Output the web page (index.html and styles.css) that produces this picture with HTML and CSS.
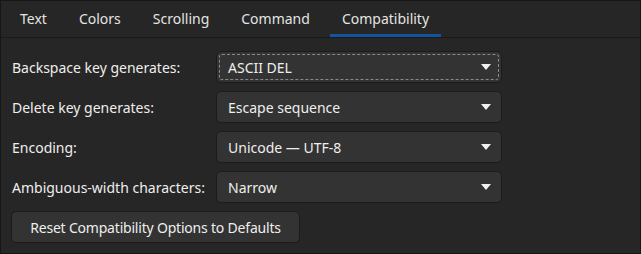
FILE: index.html
```html
<!DOCTYPE html>
<html>
<head>
<meta charset="utf-8">
<link rel="stylesheet" href="styles.css">
</head>
<body>
<div class="window">
  <div class="tabs">
    <div class="tab">Text</div>
    <div class="tab">Colors</div>
    <div class="tab">Scrolling</div>
    <div class="tab">Command</div>
    <div class="tab active">Compatibility</div>
  </div>
  <div class="content">
    <div class="grid">
      <div class="label">Backspace key generates:</div>
      <div class="combo focused"><span>ASCII DEL</span><span class="arrow"></span></div>
      <div class="label">Delete key generates:</div>
      <div class="combo"><span>Escape sequence</span><span class="arrow"></span></div>
      <div class="label">Encoding:</div>
      <div class="combo"><span>Unicode — UTF-8</span><span class="arrow"></span></div>
      <div class="label">Ambiguous-width characters:</div>
      <div class="combo"><span>Narrow</span><span class="arrow"></span></div>
    </div>
    <div class="actions">
      <button class="btn">Reset Compatibility Options to Defaults</button>
    </div>
  </div>
</div>
</body>
</html>
```
FILE: styles.css
```css
html, body {
  margin: 0;
  padding: 0;
  background: #262626;
}
.window {
  box-sizing: border-box;
  width: 641px;
  height: 254px;
  border: 1px solid #161616;
  background: #262626;
  color: #eeeeec;
  font-family: "Noto Sans", "Open Sans", sans-serif;
  font-size: 14px;
}
.tabs {
  display: flex;
  gap: 8px;
  padding-left: 7px;
  height: 36px;
  border-bottom: 1px solid #1a1a1a;
}
.tab {
  position: relative;
  padding: 0 12px;
  line-height: 36px;
  color: #e4e4e2;
}
.tab.active::after {
  content: "";
  position: absolute;
  left: 0;
  right: 0;
  bottom: 0;
  height: 3px;
  background: #15539e;
}
.content {
  padding: 13px 10px 0 10px;
}
.grid {
  display: grid;
  grid-template-columns: 205px 286px;
  row-gap: 8px;
  align-items: center;
}
.label {
  padding-left: 1px;
}
.combo {
  box-sizing: border-box;
  height: 32px;
  display: flex;
  align-items: center;
  justify-content: space-between;
  padding: 0 10px 0 11px;
  background: #333333;
  border: 1px solid #1b1b1b;
  border-radius: 5px;
  position: relative;
}
.combo.focused::before {
  content: "";
  position: absolute;
  inset: 2px;
  border: 1px dashed #8a8a8a;
  border-radius: 3px;
}
.arrow {
  width: 0;
  height: 0;
  border-left: 5px solid transparent;
  border-right: 5px solid transparent;
  border-top: 6px solid #f2f2f2;
}
.actions {
  margin-top: 8px;
}
.btn {
  box-sizing: border-box;
  height: 32px;
  width: 289px;
  padding: 0;
  white-space: nowrap;
  background: #333333;
  border: 1px solid #1b1b1b;
  border-radius: 5px;
  color: #eeeeec;
  font-family: inherit;
  font-size: 14px;
  letter-spacing: -0.2px;
}
```
